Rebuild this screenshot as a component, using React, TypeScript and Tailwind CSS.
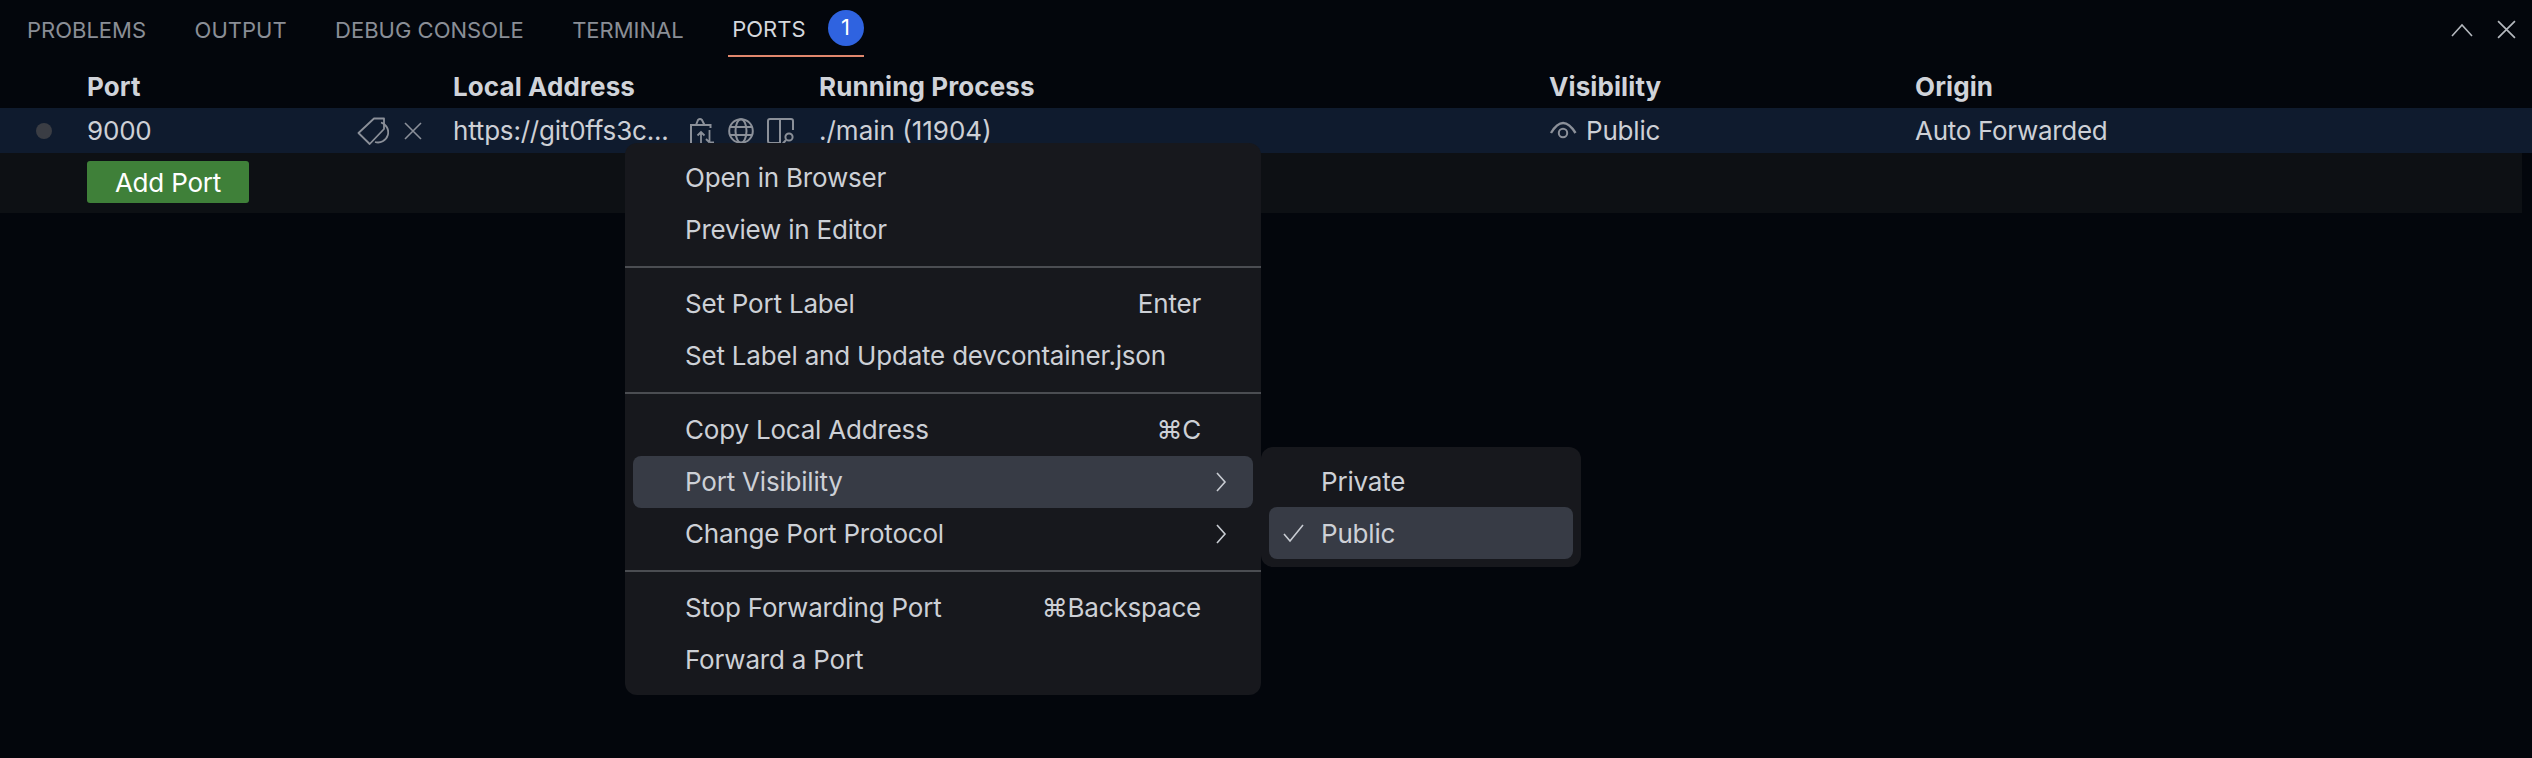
import React from "react";

const font = { fontFamily: "Inter, 'Liberation Sans', sans-serif" };

function TagIcon() {
  return (
    <svg width="32" height="28" viewBox="0 0 32 28" fill="none" stroke="#8b9099" strokeWidth="1.8">
      <path d="M1.5 16 L17 1.5 H27 V12 L12.7 27 Z" strokeLinejoin="round" />
      <path d="M24 5.5 A9.5 9.5 0 0 1 18 25" />
    </svg>
  );
}
function XIcon({ size = 18, color = "#8b9099" }: { size?: number; color?: string }) {
  return (
    <svg width={size} height={size} viewBox="0 0 18 18" fill="none" stroke={color} strokeWidth="1.6">
      <path d="M1 1 L17 17 M17 1 L1 17" />
    </svg>
  );
}
function PortsIcon() {
  return (
    <svg width="26" height="28" viewBox="0 0 26 28" fill="none" stroke="#8b9099" strokeWidth="2">
      <path d="M2 26 V8 H21.5 V11" />
      <path d="M7 8 L9 3 Q11 1 13 3 L15.5 8" />
      <path d="M12 26 V15 M8.5 18.5 L12 15 L15.5 18.5 M20.5 13 V25.5 M17 22 L20.5 25.5 M20.5 25.5 H25" strokeWidth="1.8" />
    </svg>
  );
}
function GlobeIcon() {
  return (
    <svg width="26" height="26" viewBox="0 0 26 26" fill="none" stroke="#8b9099" strokeWidth="2">
      <circle cx="13" cy="13" r="11.8" />
      <ellipse cx="13" cy="13" rx="5.5" ry="11.8" />
      <path d="M2 9 H24 M2 17 H24" />
    </svg>
  );
}
function LayoutIcon() {
  return (
    <svg width="28" height="28" viewBox="0 0 28 28" fill="none" stroke="#8b9099" strokeWidth="2">
      <path d="M13 26 H3 Q1 26 1 24 V4 Q1 2 3 2 H24 Q26 2 26 4 V13" />
      <path d="M13 2 V26" />
      <circle cx="22" cy="20" r="3.6" />
      <path d="M19 23 L15.5 27" />
    </svg>
  );
}
function EyeIcon() {
  return (
    <svg width="28" height="22" viewBox="0 0 28 22" fill="none" stroke="#8b9099" strokeWidth="2">
      <path d="M2 13 Q14 -7 26.5 13" strokeWidth="2.4" />
      <circle cx="14" cy="13" r="4.2" />
    </svg>
  );
}
function Chevron() {
  return (
    <svg width="12" height="20" viewBox="0 0 12 20" fill="none" stroke="#c8ccd2" strokeWidth="1.6">
      <path d="M2 1 L10 10 L2 19" />
    </svg>
  );
}
function Check() {
  return (
    <svg width="22" height="20" viewBox="0 0 22 20" fill="none" stroke="#c8ccd2" strokeWidth="1.6">
      <path d="M1 11 L7 18 L20 2" />
    </svg>
  );
}

function Item({ label, keys, sub, active }: { label: string; keys?: string; sub?: boolean; active?: boolean }) {
  return (
    <div className={`mx-2 flex h-[52px] items-center rounded-lg pb-[1px] pl-[52px] pr-[52px] tracking-[-0.2px] ${active ? "bg-[#373b45]" : ""}`}>
      <span className="flex-1 text-[26px] text-[#cdd0d6]">{label}</span>
      {keys && <span className="text-[26px] text-[#cdd0d6]">{keys}</span>}
      {sub && <span className="-mr-[26px] flex items-center"><Chevron /></span>}
    </div>
  );
}
function Sep() {
  return <div className="my-[10px] h-[2px] bg-[#4b4d52]" />;
}

export default function App() {
  return (
    <div className="relative h-[758px] w-[2532px] overflow-hidden bg-[#03060c]" style={font}>
      <div className="flex h-[64px] items-start justify-between">
        <div className="flex pl-[23px]">
          {["PROBLEMS", "OUTPUT", "DEBUG CONSOLE", "TERMINAL"].map((t) => (
            <div key={t} className="mr-[40.5px] flex h-[57px] items-center px-1 pt-[3px] text-[22px] text-[#8a8e96]">{t}</div>
          ))}
          <div className="flex h-[57px] items-center gap-[22px] border-b-2 border-[#e0876d] px-1 pr-0 text-[22px] text-[#d5d8dd]">
            <span className="pt-[3px]">PORTS</span>
            <span className="flex h-9 w-9 items-center justify-center rounded-full bg-[#2f63e0] text-[22px] text-white">1</span>
          </div>
        </div>
        <div className="flex items-center gap-[24px] pr-[16px] pt-[20px]">
          <svg width="22" height="14" viewBox="0 0 22 14" fill="none" stroke="#b4b8be" strokeWidth="1.6"><path d="M1 13 L11 2 L21 13" /></svg>
          <XIcon size={19} color="#b4b8be" />
        </div>
      </div>

      <div className="grid h-[44px] grid-cols-[87px_366px_366px_730px_366px_1fr] items-center text-[26px] font-bold tracking-[0.1px] text-[#d0d3d9]">
        <span />
        <span>Port</span>
        <span>Local Address</span>
        <span>Running Process</span>
        <span>Visibility</span>
        <span>Origin</span>
      </div>

      <div className="grid h-[45px] grid-cols-[87px_366px_366px_730px_366px_1fr] items-center bg-[#0f1b2e] text-[26px] tracking-[-0.2px] text-[#cdd0d6]">
        <span className="flex justify-center"><span className="h-4 w-4 rounded-full bg-[#3a3d44]" /></span>
        <span className="flex items-center justify-between pr-[31px]">
          <span>9000</span>
          <span className="flex items-center gap-[15px]"><TagIcon /><XIcon /></span>
        </span>
        <span className="flex items-center justify-between pr-[24px]">
          <span>https://git0ffs3c...</span>
          <span className="flex items-center gap-[13px]"><PortsIcon /><GlobeIcon /><LayoutIcon /></span>
        </span>
        <span className="tracking-normal">./main (11904)</span>
        <span className="flex items-center gap-[9px]"><EyeIcon />Public</span>
        <span className="tracking-[-0.3px]">Auto Forwarded</span>
      </div>

      <div className="mr-[10px] flex h-[60px] items-center bg-[#0d1014] pb-[2px] pl-[87px]">
        <div className="flex h-[42px] w-[162px] items-center justify-center rounded-[3px] bg-[#3f8039] pt-[1px] text-[26px] tracking-[-0.2px] text-white">Add Port</div>
      </div>

      <div className="absolute left-[625px] top-[143px] w-[636px] rounded-xl bg-[#17181d] py-[9px]">
        <Item label="Open in Browser" />
        <Item label="Preview in Editor" />
        <Sep />
        <Item label="Set Port Label" keys="Enter" />
        <Item label="Set Label and Update devcontainer.json" />
        <Sep />
        <Item label="Copy Local Address" keys="⌘C" />
        <Item label="Port Visibility" sub active />
        <Item label="Change Port Protocol" sub />
        <Sep />
        <Item label="Stop Forwarding Port" keys="⌘Backspace" />
        <Item label="Forward a Port" />
      </div>

      <div className="absolute left-[1261px] top-[447px] w-[320px] rounded-xl bg-[#17181d] py-2">
        <div className="mx-2 flex h-[52px] items-center pl-[52px] text-[26px] tracking-[-0.2px] text-[#cdd0d6]">Private</div>
        <div className="relative mx-2 flex h-[52px] items-center rounded-lg bg-[#373b45] pl-[52px] text-[26px] tracking-[-0.2px] text-[#cdd0d6]">
          <span className="absolute left-[14px] top-[16px]"><Check /></span>
          Public
        </div>
      </div>
    </div>
  );
}
